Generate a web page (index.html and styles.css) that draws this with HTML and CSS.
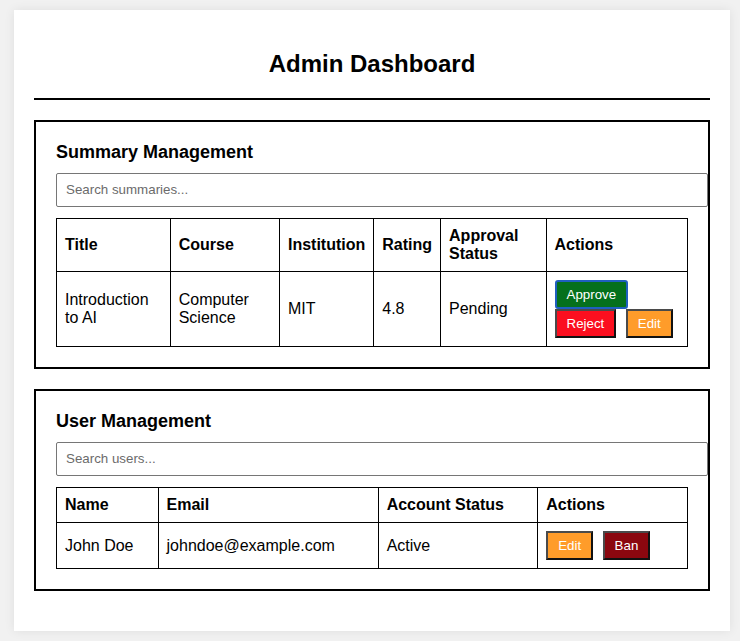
FILE: index.html
```html
<!DOCTYPE html>
<html lang="en">
<head>
<meta charset="utf-8">
<title>Admin Dashboard</title>
<link rel="stylesheet" href="styles.css">
</head>
<body>
<div class="container">
  <header class="header">
    <h1 class="title">Admin Dashboard</h1>
  </header>

  <section class="panel">
    <h2 class="panel-title">Summary Management</h2>
    <input class="search" type="text" placeholder="Search summaries...">
    <table class="data-table">
      <thead>
        <tr>
          <th>Title</th>
          <th>Course</th>
          <th>Institution</th>
          <th>Rating</th>
          <th>Approval Status</th>
          <th>Actions</th>
        </tr>
      </thead>
      <tbody>
        <tr>
          <td>Introduction to AI</td>
          <td>Computer Science</td>
          <td>MIT</td>
          <td>4.8</td>
          <td>Pending</td>
          <td class="actions"><button class="btn btn-approve">Approve</button> <button class="btn btn-reject">Reject</button> <button class="btn btn-edit">Edit</button></td>
        </tr>
      </tbody>
    </table>
  </section>

  <section class="panel">
    <h2 class="panel-title">User Management</h2>
    <input class="search" type="text" placeholder="Search users...">
    <table class="data-table">
      <thead>
        <tr>
          <th>Name</th>
          <th>Email</th>
          <th>Account Status</th>
          <th>Actions</th>
        </tr>
      </thead>
      <tbody>
        <tr>
          <td>John Doe</td>
          <td>johndoe@example.com</td>
          <td>Active</td>
          <td class="actions"><button class="btn btn-edit">Edit</button> <button class="btn btn-ban">Ban</button></td>
        </tr>
      </tbody>
    </table>
  </section>
</div>
</body>
</html>
```

FILE: styles.css
```css
html, body {
  margin: 0;
}

body {
  padding: 10px 10px 10px 14px;
  background: #f1f1f1;
  font-family: "Liberation Sans", Arial, sans-serif;
  font-size: 16px;
  color: #000;
}

.container {
  background: #fff;
  padding: 20px;
  box-shadow: 0 0 10px rgba(0, 0, 0, 0.08);
}

.header {
  padding-bottom: 20px;
  border-bottom: 2px solid #000;
  margin-bottom: 20px;
}

.title {
  margin: 20px 0 0;
  font-size: 24px;
  font-weight: bold;
  text-align: center;
}

.panel {
  border: 2px solid #000;
  padding: 20px;
  margin-bottom: 20px;
}

.panel-title {
  margin: 0 0 10px;
  font-size: 18px;
  line-height: 21px;
  font-weight: bold;
}

.search {
  display: block;
  width: 100%;
  height: 16px;
  padding: 8px 9px;
  margin: 0 0 11px;
  border: 1px solid #767676;
  border-radius: 2px;
  font-family: "Liberation Sans", Arial, sans-serif;
  font-size: 13.333px;
  line-height: 16px;
  color: #000;
  background: #fff;
}

.search::placeholder {
  color: #6b6b6b;
}

.data-table {
  width: 100%;
  border-collapse: collapse;
}

.data-table th,
.data-table td {
  border: 1px solid #000;
  padding: 8px;
  text-align: left;
  vertical-align: middle;
}

.data-table th {
  font-weight: bold;
}

.btn {
  font-family: "Liberation Sans", Arial, sans-serif;
  font-size: 13.333px;
  color: #fff;
  padding: 5px 10px;
  margin: 0 5px 0 0;
  border: 2px solid;
  border-color: #4a4a4a #111 #111 #4a4a4a;
  cursor: pointer;
}

.btn-approve {
  background: #05701c;
  border-color: #1f5fbf;
  border-radius: 3px;
}

.btn-reject {
  background: #fb0f1f;
}

.btn-edit {
  background: #ff9c2a;
}

.btn-ban {
  background: #8b070f;
}
```
